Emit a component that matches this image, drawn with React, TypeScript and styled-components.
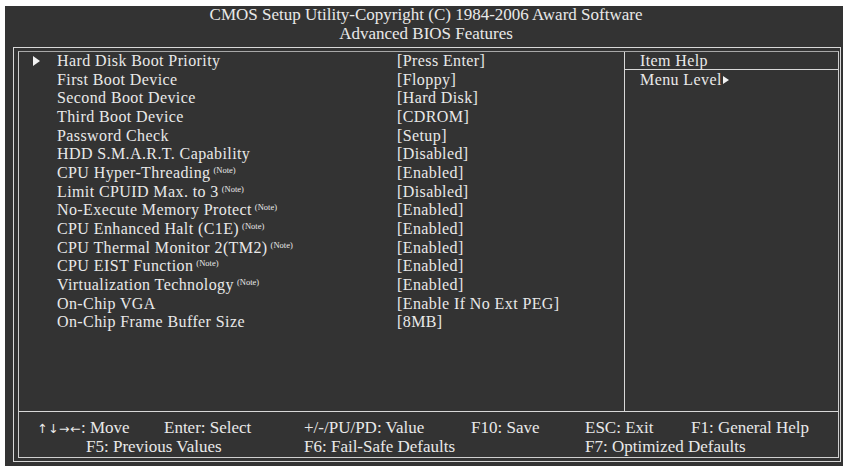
import React from "react";
import styled, { createGlobalStyle } from "styled-components";

const Global = createGlobalStyle`
  html, body { margin: 0; padding: 0; background: #ffffff; }
  body { font-family: "Liberation Serif", "Times New Roman", serif; }
`;

const Screen = styled.div`
  margin: 6px 0 0 5px;
  width: 838px;
  height: 460px;
  background: #333333;
  color: #e9e9e9;
  font-family: "Liberation Serif", "Times New Roman", serif;
  display: flex;
  flex-direction: column;
`;

const Header = styled.div`
  height: 41px;
  display: flex;
  flex-direction: column;
  align-items: center;
  padding-left: 4px;
  box-sizing: border-box;
  margin-top: -1px;
  margin-bottom: 1px;
`;

const HeaderLine = styled.div`
  font-size: 17px;
  line-height: 19px;
  white-space: nowrap;
`;

const OuterFrame = styled.div`
  margin-left: 8px;
  width: 828px;
  height: 415px;
  border: 1px solid #d8d8d8;
  padding: 3px 1px 3px 4px;
  box-sizing: border-box;
  display: flex;
`;

const InnerFrame = styled.div`
  flex: 1;
  border: 1px solid #cfcfcf;
  border-top-color: #a8a8a8;
  display: flex;
  flex-direction: column;
`;

const Main = styled.div`
  height: 359px;
  display: flex;
`;

const ItemList = styled.div`
  width: 605px;
  display: flex;
  flex-direction: column;
`;

const Row = styled.div`
  display: grid;
  grid-template-columns: 38px 340px 1fr;
  font-size: 16px;
  line-height: 18.67px;
  letter-spacing: 0.4px;
  white-space: nowrap;
`;

const Marker = styled.div`
  padding-left: 14px;
  display: flex;
  align-items: center;
`;

const Tri = styled.span<{ $w: number; $h: number }>`
  display: inline-block;
  width: 0;
  height: 0;
  border-top: ${(p) => p.$h / 2}px solid transparent;
  border-bottom: ${(p) => p.$h / 2}px solid transparent;
  border-left: ${(p) => p.$w}px solid #f2f2f2;
`;

const Label = styled.div``;

const Note = styled.sup`
  font-size: 8.5px;
  letter-spacing: 0;
  vertical-align: 5px;
  line-height: 0;
  margin-left: 3px;
`;

const Value = styled.div``;

const HelpPanel = styled.div`
  flex: 1;
  border-left: 1px solid #d8d8d8;
  display: flex;
  flex-direction: column;
`;

const HelpTitle = styled.div`
  height: 17px;
  border-bottom: 1px solid #d8d8d8;
  padding-left: 15px;
  font-size: 16px;
  line-height: 18.67px;
  letter-spacing: 0.4px;
  white-space: nowrap;
`;

const HelpBody = styled.div`
  padding: 1px 0 0 15px;
  font-size: 16px;
  line-height: 18.67px;
  letter-spacing: 0.4px;
  white-space: nowrap;
  display: flex;
  align-items: center;
  gap: 1px;
`;

const Footer = styled.div`
  flex: 1;
  border-top: 1px solid #d8d8d8;
  padding-top: 6px;
  display: grid;
  grid-template-columns: 18px 49px 78px 140px 167px 114px 106px 1fr;
  grid-auto-rows: 19px;
  font-size: 17px;
  line-height: 19px;
  white-space: nowrap;
`;

const Key = styled.div<{ $col: number; $row: number; $span?: number }>`
  grid-column: ${(p) => p.$col} / span ${(p) => p.$span ?? 1};
  grid-row: ${(p) => p.$row};
`;

const Arrows = styled.span`
  font-family: "DejaVu Sans", sans-serif;
  font-size: 12.5px;
  letter-spacing: 0.5px;
`;

type Item = { label: string; value: string; note?: boolean; sub?: boolean };

const items: Item[] = [
  { label: "Hard Disk Boot Priority", value: "[Press Enter]", sub: true },
  { label: "First Boot Device", value: "[Floppy]" },
  { label: "Second Boot Device", value: "[Hard Disk]" },
  { label: "Third Boot Device", value: "[CDROM]" },
  { label: "Password Check", value: "[Setup]" },
  { label: "HDD S.M.A.R.T. Capability", value: "[Disabled]" },
  { label: "CPU Hyper-Threading", value: "[Enabled]", note: true },
  { label: "Limit CPUID Max. to 3", value: "[Disabled]", note: true },
  { label: "No-Execute Memory Protect", value: "[Enabled]", note: true },
  { label: "CPU Enhanced Halt (C1E)", value: "[Enabled]", note: true },
  { label: "CPU Thermal Monitor 2(TM2)", value: "[Enabled]", note: true },
  { label: "CPU EIST Function", value: "[Enabled]", note: true },
  { label: "Virtualization Technology", value: "[Enabled]", note: true },
  { label: "On-Chip VGA", value: "[Enable If No Ext PEG]" },
  { label: "On-Chip Frame Buffer Size", value: "[8MB]" },
];

export default function App() {
  return (
    <>
      <Global />
      <Screen>
        <Header>
          <HeaderLine>CMOS Setup Utility-Copyright (C) 1984-2006 Award Software</HeaderLine>
          <HeaderLine>Advanced BIOS Features</HeaderLine>
        </Header>
        <OuterFrame>
          <InnerFrame>
            <Main>
              <ItemList>
                {items.map((it) => (
                  <Row key={it.label}>
                    <Marker>{it.sub && <Tri $w={7} $h={10} />}</Marker>
                    <Label>
                      {it.label}
                      {it.note && <Note>(Note)</Note>}
                    </Label>
                    <Value>{it.value}</Value>
                  </Row>
                ))}
              </ItemList>
              <HelpPanel>
                <HelpTitle>Item Help</HelpTitle>
                <HelpBody>
                  Menu Level
                  <Tri $w={6} $h={9} />
                </HelpBody>
              </HelpPanel>
            </Main>
            <Footer>
              <Key $col={2} $row={1} $span={2}>
                <Arrows>↑↓→←</Arrows>: Move
              </Key>
              <Key $col={4} $row={1}>Enter: Select</Key>
              <Key $col={5} $row={1}>+/-/PU/PD: Value</Key>
              <Key $col={6} $row={1}>F10: Save</Key>
              <Key $col={7} $row={1}>ESC: Exit</Key>
              <Key $col={8} $row={1}>F1: General Help</Key>
              <Key $col={3} $row={2} $span={2}>F5: Previous Values</Key>
              <Key $col={5} $row={2} $span={2}>F6: Fail-Safe Defaults</Key>
              <Key $col={7} $row={2} $span={2}>F7: Optimized Defaults</Key>
            </Footer>
          </InnerFrame>
        </OuterFrame>
      </Screen>
    </>
  );
}
